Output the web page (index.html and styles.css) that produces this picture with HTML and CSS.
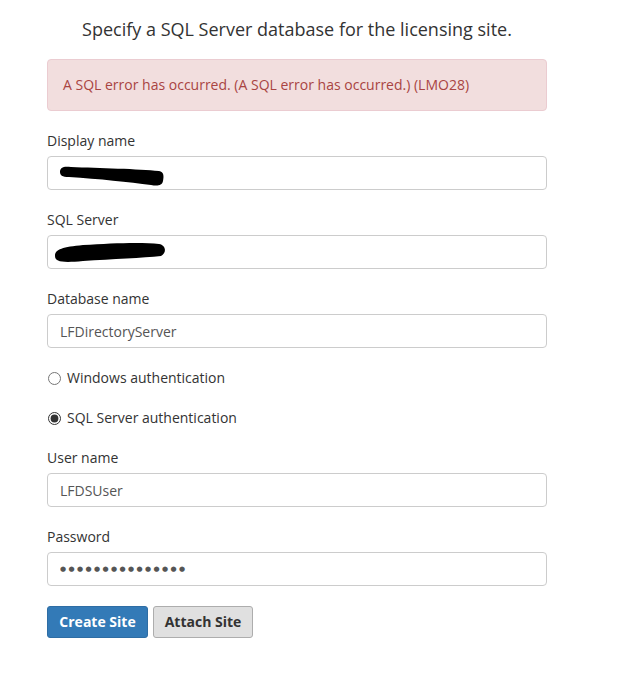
FILE: index.html
```html
<!DOCTYPE html>
<html lang="en">
<head>
  <meta charset="UTF-8" />
  <title>Licensing site</title>
  <link rel="stylesheet" href="styles.css">
</head>
<body>
  <div class="panel">
    <h2 class="title">Specify a SQL Server database for the licensing site.</h2>
    <div class="alert">A SQL error has occurred. (A SQL error has occurred.) (LMO28)</div>
    <div class="group">
      <label>Display name</label>
      <div class="field">
        <input type="text" value="">
        <svg class="scribble" width="106" height="24" viewBox="0 0 106 24">
          <path d="M1 8 C1 3, 5 2, 12 3 C 40 4, 80 5, 100 7 C 105 8, 105 12, 104 17 C 103 22, 98 22, 92 21 C 70 18, 40 15, 10 13 C 3 13, 1 11, 1 8 Z" fill="#000"/>
        </svg>
      </div>
    </div>
    <div class="group">
      <label>SQL Server</label>
      <div class="field">
        <input type="text" value="">
        <svg class="scribble wide" width="116" height="26" viewBox="0 0 116 26">
          <path d="M2 16 C 2 9, 10 7, 30 5 C 60 3, 90 2, 106 4 C 113 5, 114 13, 108 16 C 90 18, 60 19, 30 21 C 10 23, 2 22, 2 16 Z" fill="#000"/>
        </svg>
      </div>
    </div>
    <div class="group">
      <label>Database name</label>
      <div class="field"><input type="text" value="LFDirectoryServer"></div>
    </div>
    <label class="radio"><input type="radio" name="auth"> Windows authentication</label>
    <label class="radio"><input type="radio" name="auth" checked> SQL Server authentication</label>
    <div class="group">
      <label>User name</label>
      <div class="field"><input type="text" value="LFDSUser"></div>
    </div>
    <div class="group">
      <label>Password</label>
      <div class="field"><input class="secret" type="text" value="●●●●●●●●●●●●●●●"></div>
    </div>
    <div class="actions">
      <button class="btn primary">Create Site</button>
      <button class="btn plain">Attach Site</button>
    </div>
  </div>
</body>
</html>
```

FILE: styles.css
```css
* { box-sizing: border-box; }
body {
  margin: 0;
  background: #fff;
  font-family: 'Open Sans', 'Liberation Sans', sans-serif;
  font-size: 14px;
  line-height: 20px;
  color: #333;
}
.panel {
  width: 500px;
  margin-left: 47px;
  padding-top: 17px;
}
.title {
  margin: 0 0 17px;
  text-align: center;
  font-size: 18px;
  font-weight: 400;
  line-height: 25px;
}
.alert {
  background: #f2dede;
  border: 1px solid #ebccd1;
  border-radius: 4px;
  color: #a94442;
  padding: 15px 15px;
  margin-bottom: 20px;
}
.group { margin-bottom: 20px; }
.group label {
  display: block;
  margin-bottom: 5px;
}
.field { position: relative; }
.field input {
  display: block;
  width: 100%;
  height: 34px;
  padding: 6px 12px;
  border: 1px solid #ccc;
  border-radius: 4px;
  font-family: inherit;
  font-size: 14px;
  color: #555;
  background: #fff;
}
.field input.secret {
  font-family: 'DejaVu Sans', sans-serif;
  font-size: 7px;
  letter-spacing: 2.4px;
  color: #555;
}
.scribble {
  position: absolute;
  left: 12px;
  top: 8px;
}
.scribble.wide { left: 6px; top: 5px; }
.radio {
  display: flex;
  align-items: center;
  height: 20px;
  margin-bottom: 20px;
}
.radio input {
  width: 13px;
  height: 13px;
  margin: 0 6px 0 1px;
  accent-color: #333;
}
.actions {
  display: flex;
  gap: 5px;
}
.btn {
  height: 32px;
  padding: 0 4px 1px;
  border-radius: 3px;
  font-family: inherit;
  font-size: 14px;
  font-weight: 700;
  white-space: nowrap;
  cursor: pointer;
}
.btn.primary {
  width: 101px;
  background: #337ab7;
  border: 1px solid #2e6da4;
  color: #fff;
}
.btn.plain {
  width: 100px;
  background: #e0e0e0;
  border: 1px solid #adadad;
  color: #333;
}
```
